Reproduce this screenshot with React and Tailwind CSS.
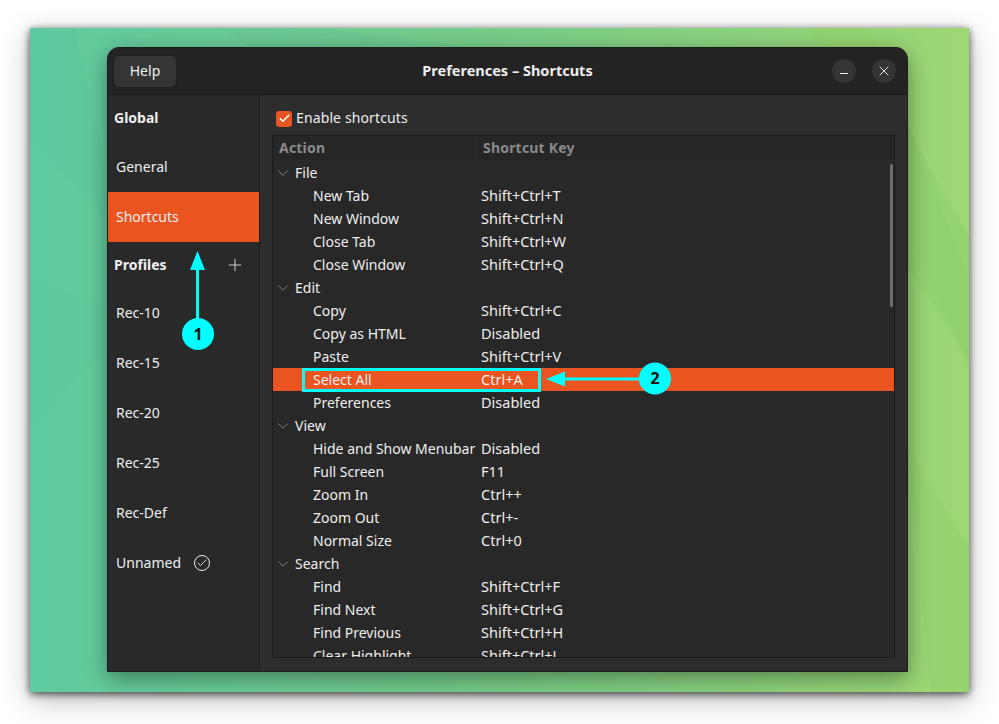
import React from 'react';
import { ChevronDown, Plus, X, Check } from 'lucide-react';

const groups = [
  ['File', [['New Tab', 'Shift+Ctrl+T'], ['New Window', 'Shift+Ctrl+N'], ['Close Tab', 'Shift+Ctrl+W'], ['Close Window', 'Shift+Ctrl+Q']]],
  ['Edit', [['Copy', 'Shift+Ctrl+C'], ['Copy as HTML', 'Disabled'], ['Paste', 'Shift+Ctrl+V'], ['Select All', 'Ctrl+A'], ['Preferences', 'Disabled']]],
  ['View', [['Hide and Show Menubar', 'Disabled'], ['Full Screen', 'F11'], ['Zoom In', 'Ctrl++'], ['Zoom Out', 'Ctrl+-'], ['Normal Size', 'Ctrl+0']]],
  ['Search', [['Find', 'Shift+Ctrl+F'], ['Find Next', 'Shift+Ctrl+G'], ['Find Previous', 'Shift+Ctrl+H'], ['Clear Highlight', 'Shift+Ctrl+J']]],
];

const profiles = ['Rec-10', 'Rec-15', 'Rec-20', 'Rec-25', 'Rec-Def'];

const SideItem = ({ children, active }) => (
  <div className={`h-[50px] flex items-center pl-2 pb-px ${active ? 'bg-[#e95420]' : ''}`}>{children}</div>
);

const Wallpaper = () => (
  <svg className="absolute inset-0" width="939" height="664" viewBox="0 0 939 664">
    <path d="M0 0H45L77 150V190L0 110Z" fill="#5ac69c" opacity="0.3" />
    <path d="M0 250L77 280V320L0 400Z" fill="#5ac69c" opacity="0.25" />
    <path d="M190 0H290L440 19H220Z" fill="#66c490" opacity="0.4" />
    <path d="M780 0H840L939 250V340Z" fill="#93d26d" opacity="0.7" />
    <path d="M878 100L939 210V330L878 240Z" fill="#8fd06c" opacity="0.6" />
    <path d="M878 420L939 520V664H900Z" fill="#92d26c" opacity="0.6" />
  </svg>
);

export default function App() {
  return (
    <div className="relative w-[999px] h-[724px] bg-white overflow-hidden pt-[28px] pl-[30px] font-['Noto_Sans',sans-serif] text-[14px] text-[#eeeeee]">
      <div className="relative w-[939px] h-[664px] pt-[19px] pl-[77px] bg-gradient-to-r from-[#5fcba0] via-[#78cd88] to-[#9dd873] shadow-[0_2px_8px_rgba(0,0,0,0.7),0_8px_28px_rgba(0,0,0,0.25)]">
        <Wallpaper />
        <div className="relative w-[801px] h-[625px] flex flex-col bg-[#2d2d2d] border border-[#1b1b1b] rounded-t-[12px] shadow-[0_6px_22px_rgba(0,0,0,0.4)] overflow-hidden">
          {/* header bar */}
          <div className="relative h-[47px] shrink-0 flex items-center justify-between pl-[6px] pr-[11px] bg-[#232323] border-b border-[#1b1b1b]">
            <button className="w-[64px] h-[33px] -ml-px rounded-[6px] bg-[#353535] border border-[#1e1e1e] text-[#eeeeee] pb-px">Help</button>
            <div className="absolute inset-x-0 text-center font-bold text-[14.5px] pointer-events-none">Preferences – Shortcuts</div>
            <div className="flex gap-[16px]">
              <div className="w-[24px] h-[24px] rounded-full bg-[#353535] flex items-center justify-center">
                <div className="w-[8px] h-[1.5px] bg-[#eeeeee] mt-[5px]" />
              </div>
              <div className="w-[24px] h-[24px] rounded-full bg-[#353535] flex items-center justify-center">
                <X size={16} strokeWidth={1.4} />
              </div>
            </div>
          </div>

          <div className="flex-1 flex min-h-0">
            {/* sidebar */}
            <div className="w-[152px] shrink-0 bg-[#292929] border-r border-[#1f1f1f]">
              <div className="h-[47px] flex items-center pl-[6px] pb-[2px] font-bold">Global</div>
              <SideItem>General</SideItem>
              <SideItem active>Shortcuts</SideItem>
              <div className="h-[46px] flex items-center justify-between pl-[6px] pr-[14px] font-bold">
                <span className="mb-[2px]">Profiles</span>
                <Plus size={20} strokeWidth={1} />
              </div>
              {profiles.map(p => <SideItem key={p}>{p}</SideItem>)}
              <SideItem>
                <span>Unnamed</span>
                <span className="ml-[13px] w-[16px] h-[16px] rounded-full border-[1.5px] border-[#eeeeee] flex items-center justify-center">
                  <Check size={12} strokeWidth={1.75} />
                </span>
              </SideItem>
            </div>

            {/* content */}
            <div className="flex-1 min-w-0 flex flex-col pl-[12px] pr-[12px] pt-[15px]">
              <label className="h-[17px] flex items-center gap-[4px] pl-[4px] mb-[8px]">
                <span className="w-[16px] h-[16px] rounded-[3px] bg-[#e95420] flex items-center justify-center">
                  <Check size={13} strokeWidth={3} className="text-white" />
                </span>
                <span className="mb-[2px] tracking-[0.12px]">Enable shortcuts</span>
              </label>
              <div className="relative w-[623px] h-[523px] border border-[#1b1b1b] bg-[#282828] overflow-hidden">
                <div className="h-[25px] flex items-center font-bold text-[#8a8a8a] tracking-[0.2px] bg-[#262626] border-b border-[#2d2d2d]">
                  <div className="w-[204px] h-full flex items-center pl-[6px] pb-px border-r border-[#2b2b2b]">Action</div>
                  <div className="pl-[6px] pb-px">Shortcut Key</div>
                </div>
                {groups.map(([name, rows]) => (
                  <div key={name}>
                    <div className="h-[23px] flex items-center pl-px">
                      <ChevronDown size={18} strokeWidth={1} className="text-[#a0a0a0]" />
                      <span className="ml-[3px]">{name}</span>
                    </div>
                    {rows.map(([action, key]) => (
                      <div key={action} className={`h-[23px] flex items-center pl-[40px] ${action === 'Select All' ? 'bg-[#e95420]' : ''}`}>
                        <span className="w-[168px] shrink-0 whitespace-nowrap">{action}</span>
                        <span className="text-[14.5px]">{key}</span>
                      </div>
                    ))}
                  </div>
                ))}
                <div className="absolute right-[1px] top-[28px] w-[3px] h-[143px] rounded-full bg-[#6e6e6e]" />
              </div>
            </div>
          </div>
        </div>
      </div>

      {/* annotations */}
      <div className="absolute left-[302px] top-[368px] w-[239px] h-[24px] border-[3px] border-[#00ffff]" />
      <svg className="absolute inset-0" width="999" height="724" viewBox="0 0 999 724">
        <path d="M197.500 268V322" stroke="#00ffff" strokeWidth="3" />
        <path d="M197.500 251L205 270H190Z" fill="#00ffff" />
        <circle cx="198" cy="334" r="16" fill="#00ffff" />
        <path d="M562 379H642" stroke="#00ffff" strokeWidth="3" />
        <path d="M546 379L565 371.500V386.500Z" fill="#00ffff" />
        <circle cx="655" cy="378.500" r="16" fill="#00ffff" />
      </svg>
      <div className="absolute left-[182px] top-[318px] w-[32px] h-[32px] flex items-center justify-center font-bold text-[16px] text-[#111111]">1</div>
      <div className="absolute left-[639px] top-[362px] w-[32px] h-[32px] flex items-center justify-center font-bold text-[16px] text-[#111111]">2</div>
    </div>
  );
}
